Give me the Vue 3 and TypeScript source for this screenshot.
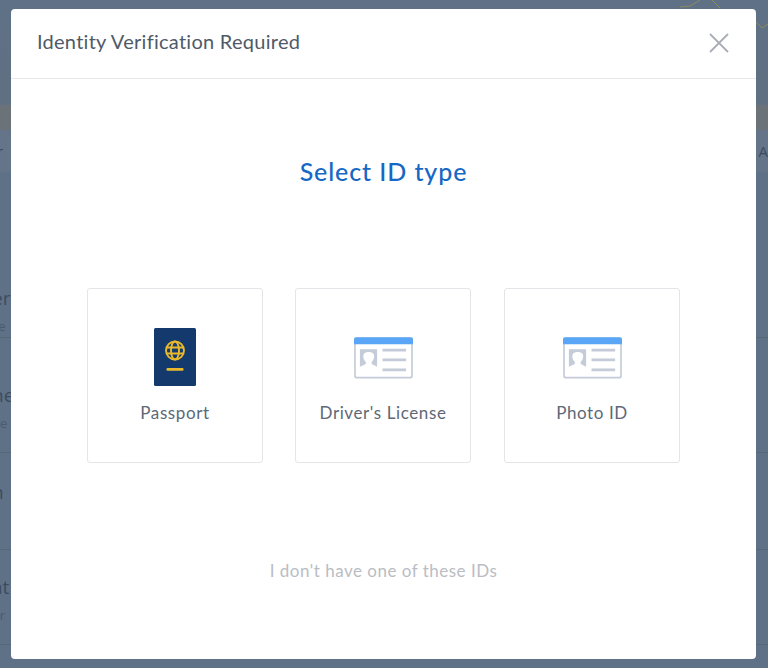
<template>
  <div class="page">
    <div class="map">
      <svg class="map-line" width="88" height="32" viewBox="0 0 88 32" fill="none">
        <path d="M0 7 L10 6 L20 0 M32 0 L40 8 M76 22 L82 28 L88 24" stroke="#8a8a5e" stroke-width="1" />
      </svg>
    </div>
    <div class="tabs">
      <span>r</span>
      <span>A</span>
    </div>
    <div
      v-for="row in rows"
      :key="row.top"
      class="row"
      :style="{ height: row.height + 'px', paddingTop: row.top + 'px' }"
    >
      <div class="row-title">{{ row.title }}</div>
      <div class="row-sub">{{ row.sub }}</div>
    </div>
  </div>

  <div class="modal">
    <header class="modal-head">
      <h2>Identity Verification Required</h2>
      <button class="close" aria-label="Close">
        <svg width="20" height="20" viewBox="0 0 20 20">
          <path d="M1 1 L19 19 M19 1 L1 19" stroke="#a9aeb6" stroke-width="1.8" fill="none" />
        </svg>
      </button>
    </header>

    <div class="modal-body">
      <h1>Select ID type</h1>

      <div class="options">
        <button class="option">
          <svg class="passport" width="42" height="58" viewBox="0 0 42 58">
            <rect width="42" height="58" rx="1.5" fill="#143a6d" />
            <g fill="none" stroke="#eab92b" stroke-width="1.9">
              <circle cx="21" cy="22.5" r="9" />
              <ellipse cx="21" cy="22.5" rx="4" ry="9" />
              <path d="M12.5 19.5 H29.5 M12.5 25.5 H29.5" />
            </g>
            <rect x="12.5" y="40" width="17" height="2.8" rx="1" fill="#eab92b" />
          </svg>
          <span>Passport</span>
        </button>

        <button v-for="name in cardTypes" :key="name" class="option">
          <svg width="59" height="42" viewBox="0 0 60 42">
            <rect x="1" y="1" width="58" height="40" rx="2" fill="#fff" stroke="#c3ccd8" stroke-width="1.7" />
            <path d="M2 0 H58 A2 2 0 0 1 60 2 V7 H0 V2 A2 2 0 0 1 2 0 Z" fill="#58a6f5" />
            <path d="M6 12 H23.5 V30 L18 27 V25 C20 23 20.5 21 20.5 19 C20.5 16.5 18 15 15 15 C12 15 9.5 16.5 9.5 19 C9.5 21 10 23 12 25 V27 L6 30 Z" fill="#c3ccd8" />
            <path d="M29 13 H53 M29 23 H53 M29 33 H53" stroke="#c3ccd8" stroke-width="2.8" />
          </svg>
          <span>{{ name }}</span>
        </button>
      </div>

      <a class="skip">I don't have one of these IDs</a>
    </div>
  </div>
</template>

<script setup lang="ts">
const cardTypes = ["Driver's License", 'Photo ID']

// rows of the page behind the dialog, only their edges show
const rows = [
  { title: 'er', sub: 'se', height: 76, top: 24 },
  { title: 'ne', sub: 'ne', height: 115, top: 45 },
  { title: 'n', sub: '', height: 97, top: 27 },
  { title: 'at', sub: 'or', height: 95, top: 25 },
]
</script>

<style>
html,
body {
  margin: 0;
  background: #5f7186;
}
</style>

<style scoped>
.page {
  height: 668px;
  overflow: hidden;
  font-family: 'Open Sans', sans-serif;
  color: #3c4c60;
}

.map {
  height: 130px;
  background: linear-gradient(#5f7186 0, #607083 104px, #6c7378 106px, #6c7378 130px);
  display: flex;
  justify-content: flex-end;
}

.tabs {
  height: 42px;
  margin-bottom: 90px;
  display: flex;
  justify-content: space-between;
  align-items: center;
  font-size: 15px;
  background: #647489;
}

.tabs span:first-child {
  margin-left: -3px;
}

.row {
  box-sizing: border-box;
  border-bottom: 1px solid #566778;
}

.row-title {
  font-size: 19px;
  line-height: 24px;
  margin-left: -8px;
}

.row-sub {
  font-size: 13px;
  line-height: 22px;
  margin: 5px 0 0 -8px;
  color: #4a5b6f;
}

.modal {
  position: fixed;
  left: 11px;
  top: 9px;
  width: 745px;
  height: 650px;
  background: #fff;
  border-radius: 4px;
  display: flex;
  flex-direction: column;
  font-family: Lato, 'Open Sans', sans-serif;
}

.modal-head {
  height: 70px;
  box-sizing: border-box;
  flex: none;
  display: flex;
  align-items: center;
  justify-content: space-between;
  padding: 0 27px 6px 26px;
  border-bottom: 1px solid #e6e8eb;
}

.modal-head h2 {
  margin: 0;
  font-size: 20px;
  font-weight: 400;
  letter-spacing: 0.27px;
  color: #4f5a68;
}

.close {
  width: 20px;
  height: 20px;
  padding: 0;
  border: 0;
  background: none;
  display: block;
  position: relative;
  top: 2px;
}

.close svg {
  display: block;
}

.modal-body {
  flex: 1;
  display: flex;
  flex-direction: column;
  align-items: center;
}

.modal-body h1 {
  margin: 73px 0 0;
  height: 38px;
  font-size: 25px;
  line-height: 38px;
  font-weight: 500;
  letter-spacing: 0.9px;
  color: #1768c4;
}

.options {
  margin-top: 98px;
  display: flex;
  gap: 32px;
}

.option {
  width: 176px;
  height: 175px;
  box-sizing: border-box;
  padding: 0;
  background: #fff;
  border: 1px solid #e3e5e8;
  border-radius: 3px;
  font-family: inherit;
  display: flex;
  flex-direction: column;
  align-items: center;
  justify-content: flex-end;
}

.option:last-child {
  margin-left: 1px;
}

.option svg {
  display: block;
  margin-bottom: 24px;
}

.option svg.passport {
  margin-bottom: 17px;
}

.option span {
  font-size: 17px;
  line-height: 20px;
  letter-spacing: 0.6px;
  color: #5d6877;
  margin-bottom: 39px;
}

.skip {
  margin-top: 98px;
  font-size: 17px;
  line-height: 20px;
  letter-spacing: 0.5px;
  color: #b9bdc3;
}
</style>
